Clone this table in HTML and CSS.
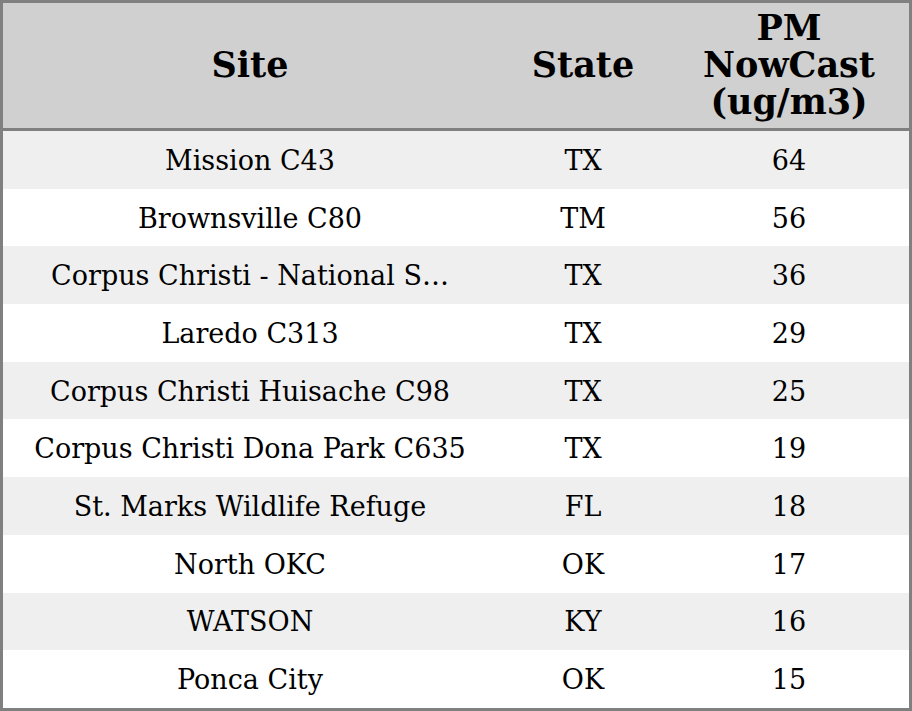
FILE: index.html
```html
<!DOCTYPE html>
<html>
<head>
<meta charset="utf-8">
<link rel="stylesheet" href="styles.css">
</head>
<body>
<table class="grid">
  <colgroup>
    <col class="c-site">
    <col class="c-state">
    <col class="c-pm">
  </colgroup>
  <thead>
    <tr>
      <th>Site</th>
      <th>State</th>
      <th>PM<br>NowCast<br>(ug/m3)</th>
    </tr>
  </thead>
  <tbody>
    <tr><td>Mission C43</td><td>TX</td><td>64</td></tr>
    <tr><td>Brownsville C80</td><td>TM</td><td>56</td></tr>
    <tr><td>Corpus Christi - National S…</td><td>TX</td><td>36</td></tr>
    <tr><td>Laredo C313</td><td>TX</td><td>29</td></tr>
    <tr><td>Corpus Christi Huisache C98</td><td>TX</td><td>25</td></tr>
    <tr><td>Corpus Christi Dona Park C635</td><td>TX</td><td>19</td></tr>
    <tr><td>St. Marks Wildlife Refuge</td><td>FL</td><td>18</td></tr>
    <tr><td>North OKC</td><td>OK</td><td>17</td></tr>
    <tr><td>WATSON</td><td>KY</td><td>16</td></tr>
    <tr><td>Ponca City</td><td>OK</td><td>15</td></tr>
  </tbody>
</table>
</body>
</html>
```
FILE: styles.css
```css
html, body {
  margin: 0;
  padding: 0;
  background: #ffffff;
}

.grid {
  width: 912px;
  border: 3px solid #808080;
  border-collapse: separate;
  border-spacing: 0;
  table-layout: fixed;
  font-family: "DejaVu Serif", serif;
  color: #000000;
}

.c-site { width: 494px; }
.c-state { width: 172px; }
.c-pm { width: 240px; }

.grid th {
  background: #d0d0d0;
  font-size: 35px;
  font-weight: bold;
  line-height: 37px;
  height: 123px;
  padding: 0 0 2px;
  border-bottom: 3px solid #808080;
  text-align: center;
  vertical-align: middle;
}

.grid td {
  font-size: 27px;
  line-height: 32px;
  height: 55.7px;
  padding: 2px 0 0;
  text-align: center;
  vertical-align: middle;
  white-space: nowrap;
}

.grid tbody tr:nth-child(odd) td {
  background: #efefef;
}
```
